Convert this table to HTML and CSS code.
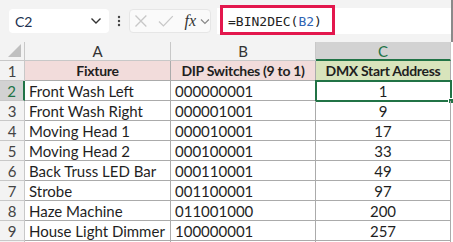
FILE: index.html
```html
<!DOCTYPE html>
<html>
<head>
<meta charset="utf-8">
<link rel="stylesheet" href="styles.css">
</head>
<body>
<div class="app">
  <div class="toolbar">
    <div class="namebox">
      <span class="name">C2</span>
      <svg class="chev" width="12" height="8" viewBox="0 0 12 8"><path d="M1.5 1.5 L6 6 L10.5 1.5" fill="none" stroke="#333" stroke-width="1.4"/></svg>
    </div>
    <svg class="dots" width="4" height="12" viewBox="0 0 4 12"><circle cx="2" cy="2" r="1.2" fill="#444"/><circle cx="2" cy="6" r="1.2" fill="#444"/><circle cx="2" cy="10" r="1.2" fill="#444"/></svg>
    <div class="fxgroup">
      <svg class="ico-x" width="14" height="14" viewBox="0 0 14 14"><path d="M1.5 1.5 L12.5 12.5 M12.5 1.5 L1.5 12.5" stroke="#c8c8c8" stroke-width="1.3" fill="none"/></svg>
      <svg class="ico-ok" width="16" height="14" viewBox="0 0 16 14"><path d="M1 7.5 L5.5 12 L15 2" stroke="#c8c8c8" stroke-width="1.3" fill="none"/></svg>
      <span class="fx">fx</span>
      <svg class="ico-dd" width="10" height="7" viewBox="0 0 10 7"><path d="M1 1.5 L5 5.5 L9 1.5" fill="none" stroke="#888" stroke-width="1.2"/></svg>
    </div>
    <div class="formula">
      <span class="ftext">=BIN2DEC(<span class="ref">B2</span>)</span>
      <div class="highlight"></div>
    </div>
  </div>
  <div class="sheet">
    <div class="corner"><svg width="13" height="13" viewBox="0 0 13 13"><path d="M13 0 L13 13 L0 13 Z" fill="#bfbfbf"/></svg></div>
    <div class="colh">A</div>
    <div class="colh">B</div>
    <div class="colh sel">C</div>

    <div class="rowh">1</div>
    <div class="cell hdr pink">Fixture</div>
    <div class="cell hdr pink">DIP Switches (9 to 1)</div>
    <div class="cell hdr green">DMX Start Address</div>

    <div class="rowh sel">2</div>
    <div class="cell">Front Wash Left</div>
    <div class="cell">000000001</div>
    <div class="cell num active">1<span class="handle"></span></div>

    <div class="rowh">3</div>
    <div class="cell">Front Wash Right</div>
    <div class="cell">000001001</div>
    <div class="cell num">9</div>

    <div class="rowh">4</div>
    <div class="cell">Moving Head 1</div>
    <div class="cell">000010001</div>
    <div class="cell num">17</div>

    <div class="rowh">5</div>
    <div class="cell">Moving Head 2</div>
    <div class="cell">000100001</div>
    <div class="cell num">33</div>

    <div class="rowh">6</div>
    <div class="cell">Back Truss LED Bar</div>
    <div class="cell">000110001</div>
    <div class="cell num">49</div>

    <div class="rowh">7</div>
    <div class="cell">Strobe</div>
    <div class="cell">001100001</div>
    <div class="cell num">97</div>

    <div class="rowh">8</div>
    <div class="cell">Haze Machine</div>
    <div class="cell">011001000</div>
    <div class="cell num">200</div>

    <div class="rowh">9</div>
    <div class="cell">House Light Dimmer</div>
    <div class="cell">100000001</div>
    <div class="cell num">257</div>

    <div class="rowh last"></div>
    <div class="cell last"></div>
    <div class="cell last"></div>
    <div class="cell last"></div>
  </div>
</div>
</body>
</html>
```

FILE: styles.css
```css
* { box-sizing: border-box; }
html, body { margin: 0; padding: 0; background: #ffffff; }
body { width: 453px; height: 242px; overflow: hidden; font-family: "Lato", "Open Sans", sans-serif; }

.app { width: 453px; }

.toolbar {
  height: 42px;
  background: #f3f3f3;
  display: flex;
  align-items: center;
  padding: 0 0 0 9px;
  border-right: 2px solid #8a8a8a;
}

.namebox {
  width: 100px;
  height: 24px;
  background: #ffffff;
  border-radius: 4px;
  display: flex;
  align-items: center;
  justify-content: space-between;
  padding: 0 7px 0 6px;
  font-size: 14px;
}
.name { color: #20304f; }

.dots { margin-left: 8px; }

.fxgroup {
  margin-left: 8px;
  width: 82px;
  height: 24px;
  background: #fafafa;
  border: 1px solid #e6e6e6;
  border-radius: 4px;
  display: flex;
  align-items: center;
  padding: 0 0 0 4px;
}
.ico-ok { margin-left: 10px; }
.fx {
  font-family: "Liberation Serif", serif;
  font-style: italic;
  font-size: 16px;
  color: #333;
  margin-left: 11px;
}
.ico-dd { margin-left: 4px; }

.formula {
  position: relative;
  margin-left: 6px;
  flex: 1;
  height: 26px;
  background: #ffffff;
  display: flex;
  align-items: center;
  padding-left: 11px;
}
.ftext {
  font-family: "DejaVu Sans Mono", "Liberation Mono", monospace;
  font-size: 13px;
  color: #222;
}
.ref { color: #2f64b4; }
.highlight {
  position: absolute;
  left: 3px;
  top: -3px;
  width: 115px;
  height: 30px;
  border: 3px solid #e3174d;
}

.sheet {
  display: grid;
  grid-template-columns: 25px 146px 145px 135px;
  grid-template-rows: 19px repeat(9, 20px) 20px;
  font-size: 15px;
  color: #1f1f1f;
}

.corner, .colh, .rowh {
  background: #f3f3f3;
  color: #333;
}
.corner {
  border-right: 1px solid #c8c8c8;
  border-bottom: 1px solid #c8c8c8;
  display: flex;
  align-items: flex-end;
  justify-content: flex-end;
  padding: 0 3px 3px 0;
}
.colh {
  border-right: 1px solid #c8c8c8;
  border-bottom: 1px solid #c8c8c8;
  text-align: center;
  line-height: 18px;
}
.colh.sel {
  background: #d2d2d2;
  color: #217346;
  border-bottom: 2px solid #217346;
}

.rowh {
  border-right: 1px solid #c8c8c8;
  border-bottom: 1px solid #c8c8c8;
  text-align: center;
  line-height: 20px;
  color: #444;
}
.rowh.sel {
  background: #d2d2d2;
  color: #217346;
  border-right: 2px solid #217346;
}

.cell {
  border-right: 1px solid #ababab;
  border-bottom: 1px solid #ababab;
  padding-left: 4px;
  line-height: 20px;
  white-space: nowrap;
  overflow: hidden;
  position: relative;
}
.cell.hdr { font-weight: 700; font-size: 14px; letter-spacing: -0.3px; text-align: center; padding-left: 0; }
.pink { background: #f2dcdb; }
.green { background: #d8e4bc; }
.num { text-align: center; padding-left: 0; }
.cell.active {
  overflow: visible;
  outline: 2px solid #217346;
  outline-offset: -1px;
}
.handle {
  position: absolute;
  right: -4px;
  bottom: -4px;
  width: 6px;
  height: 6px;
  background: #217346;
  border: 1px solid #ffffff;
}
.last { border-bottom: none; }
```
